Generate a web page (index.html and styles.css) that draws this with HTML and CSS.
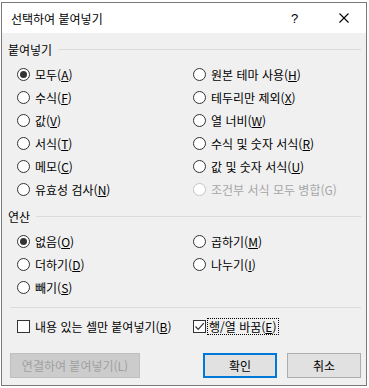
FILE: index.html
```html
<!DOCTYPE html>
<html lang="ko">
<head>
    <meta charset="UTF-8">
    <title>선택하여 붙여넣기</title>
    <link rel="stylesheet" href="styles.css">
</head>
<body>
    <div class="dialog">
        <div class="titlebar">
            <span class="title">선택하여 붙여넣기</span>
            <span class="help">?</span>
            <span class="close">
                <svg width="10" height="10" viewBox="0 0 10 10"><path d="M0.5 0.5 L9.5 9.5 M9.5 0.5 L0.5 9.5" stroke="#000" stroke-width="1.1" fill="none"/></svg>
            </span>
        </div>
        <div class="content">
            <div class="group-head"><span>붙여넣기</span></div>
            <div class="options">
                <div class="opt"><span class="radio on"></span>모두(<u>A</u>)</div>
                <div class="opt"><span class="radio"></span>원본 테마 사용(<u>H</u>)</div>
                <div class="opt"><span class="radio"></span>수식(<u>F</u>)</div>
                <div class="opt"><span class="radio"></span>테두리만 제외(<u>X</u>)</div>
                <div class="opt"><span class="radio"></span>값(<u>V</u>)</div>
                <div class="opt"><span class="radio"></span>열 너비(<u>W</u>)</div>
                <div class="opt"><span class="radio"></span>서식(<u>T</u>)</div>
                <div class="opt"><span class="radio"></span>수식 및 숫자 서식(<u>R</u>)</div>
                <div class="opt"><span class="radio"></span>메모(<u>C</u>)</div>
                <div class="opt"><span class="radio"></span>값 및 숫자 서식(<u>U</u>)</div>
                <div class="opt"><span class="radio"></span>유효성 검사(<u>N</u>)</div>
                <div class="opt disabled"><span class="radio"></span>조건부 서식 모두 병합(G)</div>
            </div>

            <div class="group-head second"><span>연산</span></div>
            <div class="options">
                <div class="opt"><span class="radio on"></span>없음(<u>O</u>)</div>
                <div class="opt"><span class="radio"></span>곱하기(<u>M</u>)</div>
                <div class="opt"><span class="radio"></span>더하기(<u>D</u>)</div>
                <div class="opt"><span class="radio"></span>나누기(<u>I</u>)</div>
                <div class="opt"><span class="radio"></span>빼기(<u>S</u>)</div>
            </div>

            <div class="separator"></div>

            <div class="options checks">
                <div class="opt"><span class="checkbox"></span>내용 있는 셀만 붙여넣기(<u>B</u>)</div>
                <div class="opt"><span class="checkbox on"><svg width="11" height="11" viewBox="0 0 11 11"><path d="M1.5 5.5 L4.2 8.3 L9.8 2.2" stroke="#333" stroke-width="1.2" fill="none"/></svg></span><span class="focus">행/열 바꿈(<u>E</u>)</span></div>
            </div>

            <div class="buttons">
                <button class="btn link" disabled>연결하여 붙여넣기(L)</button>
                <span class="spacer"></span>
                <button class="btn default">확인</button>
                <button class="btn">취소</button>
            </div>
        </div>
    </div>
</body>
</html>
```

FILE: styles.css
```css
body {
    margin: 0;
    padding: 2px 0 0 1px;
    background-color: #ffffff;
    font-family: "Noto Sans CJK KR", "Noto Sans", sans-serif;
    font-size: 12px;
    color: #000;
}
.dialog {
    width: 366px;
    height: 384px;
    box-sizing: border-box;
    border: 1px solid #7a7a7a;
    background-color: #f0f0f0;
    display: flex;
    flex-direction: column;
}
.titlebar {
    height: 30px;
    background-color: #ffffff;
    display: flex;
    align-items: center;
    padding-left: 9px;
}
.title {
    flex: 1;
    font-size: 12px;
}
.help {
    width: 16px;
    margin-right: 32px;
    font-family: "Liberation Sans", sans-serif;
    font-size: 13px;
}
.close {
    display: flex;
    margin-right: 17px;
}
.content {
    padding: 0 5px 0 6px;
    display: flex;
    flex-direction: column;
}
.group-head {
    margin-top: 8px;
    height: 16px;
    display: flex;
    align-items: center;
}
.group-head.second {
    margin-top: 7px;
}
.group-head::after {
    content: "";
    flex: 1;
    height: 1px;
    background-color: #dcdcdc;
    margin-left: 6px;
}
.options {
    display: grid;
    grid-template-columns: 176px 1fr;
    grid-auto-rows: 23px;
    margin: 6px 0 0 9px;
}
.opt {
    display: flex;
    align-items: center;
    white-space: nowrap;
}
.opt u {
    text-decoration-thickness: 1px;
    text-underline-offset: 1px;
}
.opt.disabled {
    color: #a6a6a6;
}
.radio {
    width: 13px;
    height: 13px;
    box-sizing: border-box;
    border: 1px solid #333;
    border-radius: 50%;
    background-color: #fff;
    margin-right: 5px;
    display: flex;
    align-items: center;
    justify-content: center;
    flex-shrink: 0;
}
.radio.on::after {
    content: "";
    width: 7px;
    height: 7px;
    border-radius: 50%;
    background-color: #333;
}
.disabled .radio {
    border-color: #c6c6c6;
}
.separator {
    margin-top: 8px;
    height: 1px;
    background-color: #dcdcdc;
    margin-left: 2px;
}
.checks {
    margin-top: 10px;
    grid-auto-rows: 17px;
}
.checkbox {
    width: 13px;
    height: 13px;
    box-sizing: border-box;
    border: 1px solid #333;
    background-color: #fff;
    margin-right: 2px;
    display: flex;
    align-items: center;
    justify-content: center;
    flex-shrink: 0;
}
.opt:first-child .checkbox {
    margin-right: 5px;
}
.focus {
    outline: 1px dotted #000;
    padding: 0 2px 0 1px;
    line-height: 15px;
}
.buttons {
    margin-top: 18px;
    display: flex;
    margin-left: 2px;
    margin-right: 0;
}
.spacer {
    flex: 1;
}
.btn {
    height: 25px;
    width: 74px;
    box-sizing: border-box;
    border: 1px solid #adadad;
    background-color: #e1e1e1;
    font-family: "Noto Sans CJK KR", "Noto Sans", sans-serif;
    font-size: 12px;
    color: #000;
    padding: 0;
    margin-left: 10px;
}
.btn.link {
    width: 130px;
    margin-left: 0;
    background-color: #cccccc;
    border-color: #bfbfbf;
    color: #a0a0a0;
}
.btn.default {
    border: 2px solid #0078d7;
}
```
